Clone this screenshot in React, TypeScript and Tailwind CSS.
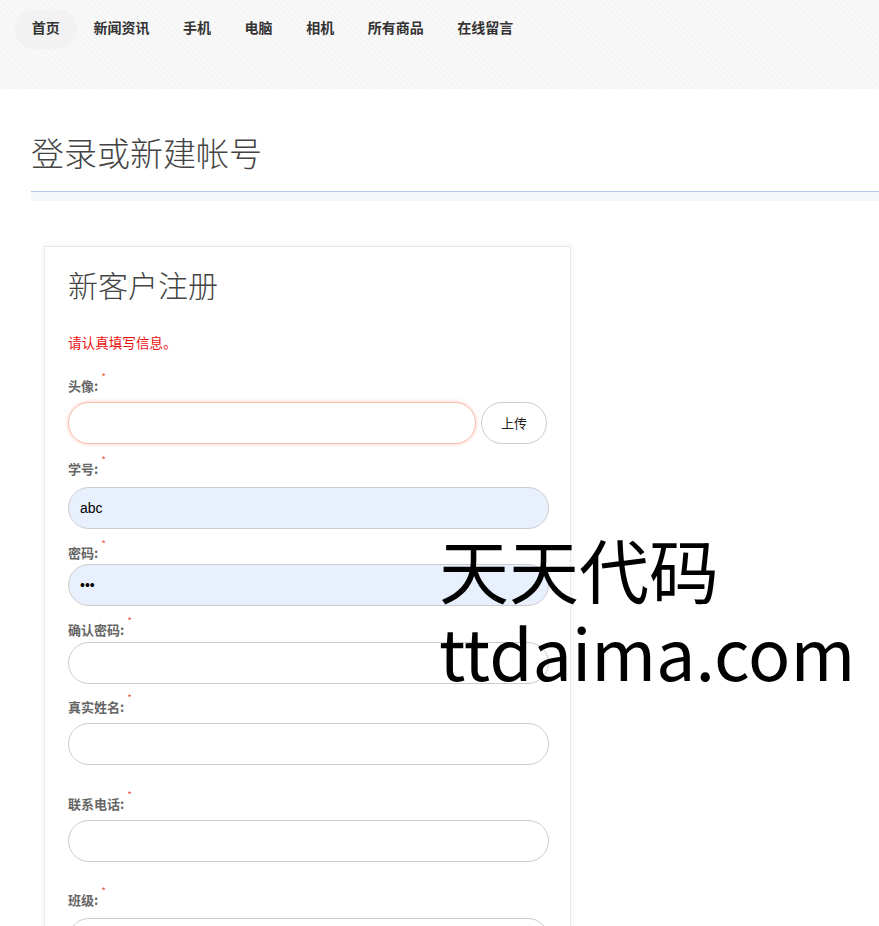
import React from 'react';

const NAV = ['首页', '新闻资讯', '手机', '电脑', '相机', '所有商品', '在线留言'];

const font = "font-['Microsoft_YaHei','Noto_Sans_CJK_SC',sans-serif]";

const Label: React.FC<{ text: string; className?: string }> = ({ text, className }) => (
  <div className={`h-4 text-[13px] leading-4 font-bold text-[#666] ${className ?? ''}`}>
    {text}:<sup className="ml-[3px] text-[10px] font-normal text-[#e8584a] align-[5px]">*</sup>
  </div>
);

const Field: React.FC<{ label: string; labelMt: string; inputMt: string; value?: string; filled?: boolean; type?: string }> = ({
  label,
  labelMt,
  inputMt,
  value,
  filled,
  type,
}) => (
  <div>
    <Label text={label} className={labelMt} />
    <input
      type={type ?? 'text'}
      defaultValue={value}
      className={`${inputMt} block w-[481px] h-[42px] rounded-full border border-[#cccccc] px-[11px] text-[14px] text-black outline-none ${
        filled ? 'bg-[#e8f0fe]' : 'bg-white'
      } font-['Liberation_Sans',sans-serif]`}
    />
  </div>
);

const App: React.FC = () => {
  return (
    <div className={`relative min-h-[926px] bg-white overflow-hidden ${font}`}>
      {/* top nav */}
      <header className="h-[89px] bg-[#f7f7f7] bg-[repeating-linear-gradient(45deg,#f9f9f9_0px,#f9f9f9_2px,#f5f5f5_2px,#f5f5f5_4px)] pt-[9px] pl-[15px]">
        <nav className="flex items-center">
          {NAV.map((item, i) => (
            <a
              key={item}
              className={`h-10 px-[16.8px] pb-1 flex items-center rounded-full text-[14px] font-bold text-[#333] ${
                i === 0 ? 'bg-[#f2f2f2]' : ''
              }`}
            >
              {item}
            </a>
          ))}
        </nav>
      </header>

      <main className="pl-[31px]">
        <h1 className="mt-[41px] text-[33px] leading-[44px] font-light text-[#444]">登录或新建帐号</h1>
        <div className="mt-[17px] h-px bg-[#aecbe6]"></div>
        <div className="h-[9px] bg-[#f5f8fb]"></div>

        <section className="mt-[45px] ml-[13px] w-[527px] border border-[#e8e8e8] bg-white px-[23px] pt-[17px] pb-10 shadow-[0_0_6px_rgba(0,0,0,0.08)]">
          <h2 className="text-[30px] leading-[40px] font-light text-[#444]">新客户注册</h2>
          <p className="mt-[28px] text-[13.6px] leading-5 text-[#ee1111]">请认真填写信息。</p>

          <Label text="头像" className="mt-[26px]" />
          <div className="mt-2 flex items-center gap-[5px]">
            <input
              type="text"
              className="block w-[409px] h-[42px] rounded-full border border-[#f6bfae] bg-white px-[11px] outline-none shadow-[0_0_4px_rgba(240,110,90,0.35)]"
            />
            <button className="w-[66px] h-[42px] rounded-full border border-[#cccccc] bg-white text-[13px] text-[#222]">
              上传
            </button>
          </div>

          <Field label="学号" labelMt="mt-[17px]" inputMt="mt-[10px]" value="abc" filled />
          <Field label="密码" labelMt="mt-4" inputMt="mt-[3px]" value="abc" filled type="password" />
          <Field label="确认密码" labelMt="mt-4" inputMt="mt-1" />
          <Field label="真实姓名" labelMt="mt-[15px]" inputMt="mt-2" />
          <Field label="联系电话" labelMt="mt-[31px]" inputMt="mt-2" />
          <Field label="班级" labelMt="mt-[30px]" inputMt="mt-[10px]" />
        </section>
      </main>

      {/* watermark overlay */}
      <div className="absolute left-[439px] top-[527px] text-black font-['Microsoft_YaHei','Noto_Sans_CJK_SC',sans-serif] pointer-events-none">
        <div className="text-[70px] leading-[84px]">天天代码</div>
        <div className="text-[70px] leading-[84px] -mt-[2px]">ttdaima.com</div>
      </div>
    </div>
  );
};

export default App;
